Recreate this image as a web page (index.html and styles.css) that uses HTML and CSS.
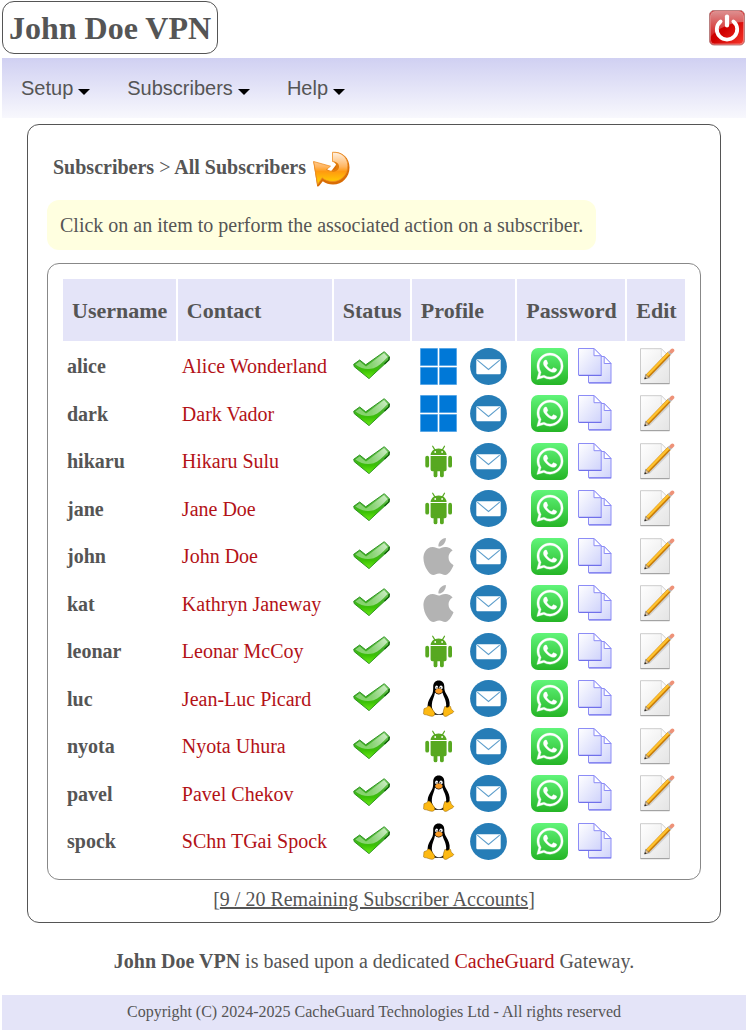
FILE: index.html
```html
<!DOCTYPE html>
<html lang="en">
<head>
  <meta charset="UTF-8">
  <meta name="viewport" content="width=device-width, initial-scale=1.0">
  <title>John Doe VPN</title>
  <link rel="stylesheet" href="styles.css">
</head>
<body>

<svg class="sprite" aria-hidden="true">
  <defs>
    <linearGradient id="gCheck" x1="0" y1="0" x2="0" y2="1">
      <stop offset="0" stop-color="#8fd67c"/>
      <stop offset=".45" stop-color="#3fb022"/>
      <stop offset=".7" stop-color="#3cc206"/>
      <stop offset="1" stop-color="#6aec14"/>
    </linearGradient>
    <linearGradient id="gGloss" x1="0" y1="0" x2="1" y2="0">
      <stop offset="0" stop-color="#a5e094"/>
      <stop offset=".5" stop-color="#a5e094"/>
      <stop offset="1" stop-color="#f2fbf0"/>
    </linearGradient>
    <linearGradient id="gWhats" x1="0" y1="0" x2="0" y2="1">
      <stop offset="0" stop-color="#61f57a"/>
      <stop offset="1" stop-color="#25b526"/>
    </linearGradient>
    <linearGradient id="gCopy" x1="0" y1="0" x2="1" y2="1">
      <stop offset="0" stop-color="#ffffff"/>
      <stop offset="1" stop-color="#cfd3fb"/>
    </linearGradient>
    <linearGradient id="gPage" x1="0" y1="0" x2="1" y2="1">
      <stop offset="0" stop-color="#ffffff"/>
      <stop offset="1" stop-color="#e4e4e4"/>
    </linearGradient>
    <linearGradient id="gPower" x1="0" y1="0" x2="1" y2="1">
      <stop offset="0" stop-color="#c60d10"/>
      <stop offset=".5" stop-color="#d00000"/>
      <stop offset="1" stop-color="#f8392d"/>
    </linearGradient>
    <linearGradient id="gShine" x1="0" y1="0" x2="0" y2="1">
      <stop offset="0" stop-color="#e0b0b0"/>
      <stop offset="1" stop-color="#d92020"/>
    </linearGradient>
    <linearGradient id="gBack" x1="0" y1="0" x2="0" y2="1">
      <stop offset="0" stop-color="#fff2e4"/>
      <stop offset=".45" stop-color="#ffb560"/>
      <stop offset=".6" stop-color="#ff9a10"/>
      <stop offset="1" stop-color="#ffd800"/>
    </linearGradient>
  </defs>

  <symbol id="check" viewBox="0 0 37 37">
    <path d="M.7 16.300 6.700 12l6 4.800L31.300 3.700l5 5-.3 3.300-20 18.600L1.300 18.700z" fill="url(#gCheck)" stroke="#2f9422" stroke-width="1" stroke-linejoin="round"/>
    <path d="M2.300 16.500 6.700 13.500l6.300 5L31 5.300l3.600 3.600c-5 5.500-9 9.600-14 11.300-6 1.600-12 .8-18.300-3.700z" fill="url(#gGloss)" opacity=".7"/>
    <path d="M36.200 8.900 35.800 12l-4.300 4" fill="none" stroke="#14600f" stroke-width="1.400"/>
  </symbol>

  <symbol id="windows" viewBox="0 0 37 37">
    <path d="M.5.5h17v17H.5zM19.500.5h17v17h-17zM.5 19.500h17v17H.5zM19.500 19.500h17v17h-17z" fill="#0078d7" stroke="#3f9be2" stroke-width=".6"/>
  </symbol>

  <symbol id="android" viewBox="0 0 37 37">
    <g fill="#57a820">
      <path d="M10.600 11.900c.3-3.600 3.400-6.400 8-6.400s7.700 2.800 8 6.400z"/>
      <path d="M10.600 13h16v13.500a1.800 1.800 0 0 1-1.800 1.800H12.400a1.800 1.800 0 0 1-1.800-1.800z"/>
      <rect x="5.300" y="12.800" width="3.800" height="11.800" rx="1.900"/>
      <rect x="28.200" y="12.800" width="3.800" height="11.800" rx="1.900"/>
      <rect x="13.600" y="24" width="3.800" height="10.300" rx="1.900"/>
      <rect x="20" y="24" width="3.800" height="10.300" rx="1.900"/>
    </g>
    <path d="m12.700 3.200 2 3.400M24.500 3.200l-2 3.400" stroke="#57a820" stroke-width="1.200" stroke-linecap="round"/>
    <circle cx="15.200" cy="9" r=".9" fill="#fff"/>
    <circle cx="22.100" cy="9" r=".9" fill="#fff"/>
  </symbol>

  <symbol id="apple" viewBox="0 0 37 37">
    <path transform="scale(1.540)" fill="#b3b3b3" d="M12.152 6.896c-.948 0-2.415-1.078-3.96-1.04-2.04.027-3.91 1.183-4.961 3.014-2.117 3.675-.546 9.103 1.519 12.09 1.013 1.454 2.208 3.09 3.792 3.039 1.52-.065 2.09-.987 3.935-.987 1.831 0 2.35.987 3.96.948 1.637-.026 2.676-1.48 3.676-2.948 1.156-1.688 1.636-3.325 1.662-3.415-.039-.013-3.182-1.221-3.22-4.857-.026-3.04 2.48-4.494 2.597-4.559-1.429-2.09-3.623-2.324-4.39-2.376-2-.156-3.675 1.09-4.61 1.09zM15.53 3.83c.843-1.012 1.4-2.427 1.245-3.83-1.207.052-2.662.805-3.532 1.818-.78.896-1.454 2.338-1.273 3.714 1.338.104 2.715-.688 3.559-1.701"/>
  </symbol>

  <symbol id="linux" viewBox="0 0 37 37">
    <path d="M18.700.4c3.600 0 5.600 2.400 5.600 6 0 3.300.4 5 2 7.700 2.200 3.600 3.800 7.400 3.300 11.400-.5 3.500-3 6.500-6 9.300H13c-3-2.500-5.500-5.500-5.400-9.300.1-4 2.300-7.300 4.100-10.500 1.500-2.700 1.500-5 1.500-8.100 0-4 2-6.500 5.500-6.500z" fill="#000"/>
    <path d="M15 12.500c2 2.600 5.500 2.600 7.500 0 .6 3.500 3.500 6.800 3.700 12 .1 5-2.700 9.700-7.200 9.700-4.600 0-7.300-4.200-7.200-9.200.1-4.500 2.500-8 3.200-12.500z" fill="#fff"/>
    <ellipse cx="16.600" cy="7.500" rx="1.500" ry="2" fill="#fff"/>
    <ellipse cx="21" cy="7.500" rx="1.700" ry="2" fill="#fff"/>
    <circle cx="17" cy="7.900" r=".7"/>
    <circle cx="20.600" cy="7.900" r=".7"/>
    <path d="M15 10.800c1.500-1.800 2.500-2.300 3.700-2.300 1.400 0 3 .9 4 2.200-.4 1.600-2 3.100-4 3.100-1.800 0-3.200-1.300-3.700-3z" fill="#fb9c25"/>
    <path d="M9 26c2 .5 3.500 4 5.300 6 1.200 1.800.4 4-2 4.300-2.500.2-4.600-1.600-8-1.800-1.200-.2-.6-2-.5-3.500.1-1.200-.2-2.700 1.200-2.700C7 28.200 7.500 25.700 9 26zM25 26.200c1.500 1.700 3.300 1.500 4.800-.2 1.300.3.700 2.300 1.800 3.500 1 1.200 2.500 1.400 2 2.400-1 1.700-4 2-6 3.800-1.800 1.200-4.200.9-4.500-1.700-.1-2.300.9-5.600 1.900-7.800z" fill="#fdb913" stroke="#8a5a00" stroke-width=".5"/>
  </symbol>

  <symbol id="mail" viewBox="0 0 37 37">
    <circle cx="18.500" cy="18.500" r="18.400" fill="#267db7"/>
    <rect x="6.300" y="11.200" width="24.400" height="15" rx="1.200" fill="#fff"/>
    <path d="m7.300 12.200 11.200 9.300 11.200-9.300" fill="none" stroke="#5f9fcc" stroke-width="1.100"/>
  </symbol>

  <symbol id="whatsapp" viewBox="0 0 37 37">
    <rect width="37" height="37" rx="7" fill="url(#gWhats)"/>
    <path transform="translate(5.800 5) scale(1.100)" fill="#fff" stroke="#fff" stroke-width=".3" d="M17.472 14.382c-.297-.149-1.758-.867-2.03-.967-.273-.099-.471-.148-.67.15-.197.297-.767.966-.94 1.164-.173.199-.347.223-.644.075-.297-.15-1.255-.463-2.39-1.475-.883-.788-1.48-1.761-1.653-2.059-.173-.297-.018-.458.13-.606.134-.133.298-.347.446-.52.149-.174.198-.298.298-.497.099-.198.05-.371-.025-.52-.075-.149-.669-1.612-.916-2.207-.242-.579-.487-.5-.669-.51-.173-.008-.371-.01-.57-.01-.198 0-.52.074-.792.372-.272.297-1.04 1.016-1.04 2.479 0 1.462 1.065 2.875 1.213 3.074.149.198 2.096 3.2 5.077 4.487.709.306 1.262.489 1.694.625.712.227 1.36.195 1.871.118.571-.085 1.758-.719 2.006-1.413.248-.694.248-1.289.173-1.413-.074-.124-.272-.198-.57-.347m-5.421 7.403h-.004a9.87 9.87 0 01-5.031-1.378l-.361-.214-3.741.982.998-3.648-.235-.374a9.86 9.86 0 01-1.51-5.26c.001-5.45 4.436-9.884 9.888-9.884 2.64 0 5.122 1.03 6.988 2.898a9.825 9.825 0 012.893 6.994c-.003 5.45-4.437 9.884-9.885 9.884m8.413-18.297A11.815 11.815 0 0012.05 0C5.495 0 .16 5.335.157 11.892c0 2.096.547 4.142 1.588 5.945L.057 24l6.305-1.654a11.882 11.882 0 005.683 1.448h.005c6.554 0 11.89-5.335 11.893-11.893a11.821 11.821 0 00-3.48-8.413z"/>
  </symbol>

  <symbol id="copy" viewBox="0 0 34 37">
    <g fill="url(#gCopy)" stroke="#8c8cf6" stroke-width="1" stroke-linejoin="round">
      <path d="M10.500 8.500h15.700l6.800 7v19.200H10.500z"/>
      <path d="M26.200 8.500v7H33z" fill="#fff"/>
      <path d="M.5.5H16l7.200 7.200v19.500H.5z"/>
      <path d="M16 .5v7.200h7.200z" fill="#fff"/>
    </g>
    <path d="M1 27.500h22.500M11 35h22.300" stroke="#7070ea" stroke-width="1"/>
  </symbol>

  <symbol id="edit" viewBox="0 0 37 37">
    <path d="M2.500.7h20.800L31.500 9v26.500h-29z" fill="url(#gPage)" stroke="#bfbfbf" stroke-width=".8"/>
    <path d="M2.500 35.700h29" stroke="#9a9a9a" stroke-width="1"/>
    <path d="M23.300.7v8.300h8.200z" fill="#fafafa" stroke="#cfcfcf" stroke-width=".6"/>
    <path d="m11 30 20-20" stroke="#999" stroke-width="2" opacity=".35"/>
    <path d="m9.200 28.300 22.300-23" stroke="#c67a08" stroke-width="4.200"/>
    <path d="m8.700 27.800 22.300-23" stroke="#ffc22e" stroke-width="2.400"/>
    <path d="m6.700 31 1-4.600 3.500 3.300z" fill="#e5c190" stroke="#666" stroke-width=".6"/>
    <path d="m6.400 31.300.6-2.200 1.500 1.500z" fill="#222"/>
    <path d="m31 5.800 1.800-1.900" stroke="#b8b8b8" stroke-width="4.200"/>
    <path d="m33.500 3.300.9-.9" stroke="#ee9278" stroke-width="3.800" stroke-linecap="round"/>
  </symbol>

  <symbol id="power" viewBox="0 0 36 36">
    <rect x=".5" y=".5" width="35" height="34.500" rx="4.500" fill="url(#gPower)" stroke="#b98080"/>
    <path d="M1.500 6a4.500 4.500 0 0 1 4.500-4.500h24A4.500 4.500 0 0 1 34.500 6v6C24 12 8 18 1.500 27z" fill="url(#gShine)" opacity=".8"/>
    <rect x="1.500" y="1.500" width="33" height="32.500" rx="3.800" fill="none" stroke="#fff" stroke-width=".7" opacity=".5"/>
    <path d="M11.600 11.400a10.200 10.200 0 1 0 12.800 0" fill="none" stroke="#fff" stroke-width="3.800" stroke-linecap="round"/>
    <path d="M18 6.500v9" stroke="#fff" stroke-width="4.200" stroke-linecap="round"/>
  </symbol>

  <symbol id="back" viewBox="0 0 37 36">
    <path d="M.4 10 4.200 35l1.600-.3 4-5C13 32 16 33 20 33c9.500 0 16.500-7.500 16.500-17C36.500 6.500 30 .3 20 .5L24 12l-6 8z" fill="#d96d05"/>
    <path d="M.6 10 17.500 14.700l-4.300 3.500c3.300 2.100 7.500 1.700 9.700-.5 2.600-2.700 1.300-7.200-3.400-7.700V.7C29 .3 34.800 6.300 34.800 14c0 9-6.300 16-15 16-4.300 0-7.800-1.200-10.600-3.700L4.600 33z" fill="url(#gBack)" stroke="#ee8f24" stroke-width=".8" stroke-linejoin="round"/>
    <path d="M19.500 10c3.800 1.300 4.800 5 3 7.600-1 1.600-2.800 2.400-4.700 2.700 4.200.8 8.700-1.800 8.200-5.800-.4-2.800-2.800-4.500-6.500-4.500z" fill="#e27b0a"/>
  </symbol>
</svg>

<header class="header">
  <h1 class="brand">John Doe VPN</h1>
  <a class="logout" href="#" aria-label="Log out"><svg class="power"><use href="#power"/></svg></a>
</header>

<nav class="navbar">
  <button type="button">Setup<span class="caret"></span></button>
  <button type="button">Subscribers<span class="caret"></span></button>
  <button type="button">Help<span class="caret"></span></button>
</nav>

<main class="container">
  <div class="crumbs">
    <h2>Subscribers <span>&gt;</span> All Subscribers</h2>
    <a href="#" aria-label="Back"><svg class="icon"><use href="#back"/></svg></a>
  </div>

  <p class="note">Click on an item to perform the associated action on a subscriber.</p>

  <div class="card">
    <table class="subscribers">
      <thead>
        <tr>
          <th>Username</th>
          <th>Contact</th>
          <th>Status</th>
          <th>Profile</th>
          <th>Password</th>
          <th>Edit</th>
        </tr>
      </thead>
      <tbody id="subscriberList"></tbody>
    </table>
  </div>

  <p class="remaining">[<a href="#">9 / 20 Remaining Subscriber Accounts</a>]</p>
</main>

<p class="based"><strong>John Doe VPN</strong> is based upon a dedicated <a href="#">CacheGuard</a> Gateway.</p>

<footer class="footer">Copyright (C) 2024-2025 CacheGuard Technologies Ltd - All rights reserved</footer>

<script src="script.js"></script>
</body>
</html>
```

FILE: styles.css
```css
body {
  margin: 0 1px 0 2px;
  font-family: "Liberation Serif", "Times New Roman", serif;
  font-size: 20px;
  line-height: 24px;
  color: #555;
  background: #fff;
}

a {
  color: #b31217;
  text-decoration: none;
}

svg {
  display: block;
}

.sprite {
  position: absolute;
  width: 0;
  height: 0;
}

.icon {
  width: 37px;
  height: 37px;
}

.icon.narrow {
  width: 34px;
}

.header {
  display: flex;
  justify-content: space-between;
  align-items: center;
  padding: 1px 1px 4px 0;
}

.brand {
  margin: 0;
  padding: 8px 6px 6px;
  border: 1px solid #555;
  border-radius: 12px;
  font-size: 32px;
  line-height: 37px;
}

.power {
  width: 36px;
  height: 36px;
}

.navbar {
  display: flex;
  height: 60px;
  background: linear-gradient(#d0d0f2, #f8f8fd);
}

.navbar button {
  display: flex;
  align-items: center;
  gap: 5px;
  padding: 0 18px 0 19px;
  border: none;
  background: none;
  font-family: "Liberation Sans", Arial, sans-serif;
  font-size: 20px;
  color: #555;
  cursor: pointer;
}

.caret {
  margin-top: 8px;
  border: 6px solid transparent;
  border-top-color: #000;
  border-bottom: none;
}

.container {
  margin: 6px 25px 0;
  padding: 26px 19px 11px;
  border: 1px solid #555;
  border-radius: 12px;
}

.crumbs {
  display: flex;
  align-items: center;
  gap: 7px;
  padding-left: 6px;
}

.crumbs h2 {
  margin: 0;
  padding-bottom: 6px;
  font-size: 20px;
}

.crumbs span {
  font-weight: normal;
}

.note {
  width: fit-content;
  margin: 12px 0 13px;
  padding: 13px;
  border-radius: 12px;
  background: #ffffe0;
}

.card {
  padding: 12px 13px 13px;
  border: 1px solid #888;
  border-radius: 12px;
}

.subscribers {
  width: 100%;
  border-spacing: 2px 3px;
}

.subscribers th {
  height: 60px;
  padding: 2px 8px 0 9px;
  background: #e4e4f8;
  font-size: 22px;
  text-align: left;
}

.subscribers td {
  height: 44px;
  padding: 0 4px;
}

.subscribers tr:nth-child(even) td {
  height: 45px;
}

.username {
  font-weight: bold;
}

.icons {
  display: flex;
  justify-content: center;
  gap: 13px;
  padding: 0 4px;
}

.icons.tight {
  gap: 10px;
}

.remaining {
  margin: 7px 0 0;
  text-align: center;
}

.remaining a {
  color: #555;
  text-decoration: underline;
}

.based {
  margin: 26px 0 22px;
  text-align: center;
}

.footer {
  padding: 5px 0 6px;
  background: #e4e4f8;
  font-size: 16px;
  text-align: center;
}
```

FILE: script.js
```js
const subscribers = [
  { username: "alice", contact: "Alice Wonderland", os: "windows" },
  { username: "dark", contact: "Dark Vador", os: "windows" },
  { username: "hikaru", contact: "Hikaru Sulu", os: "android" },
  { username: "jane", contact: "Jane Doe", os: "android" },
  { username: "john", contact: "John Doe", os: "apple" },
  { username: "kat", contact: "Kathryn Janeway", os: "apple" },
  { username: "leonar", contact: "Leonar McCoy", os: "android" },
  { username: "luc", contact: "Jean-Luc Picard", os: "linux" },
  { username: "nyota", contact: "Nyota Uhura", os: "android" },
  { username: "pavel", contact: "Pavel Chekov", os: "linux" },
  { username: "spock", contact: "SChn TGai Spock", os: "linux" }
];

function iconLink(name, extra = "") {
  return `<a href="#" aria-label="${name}"><svg class="icon ${extra}"><use href="#${name}"/></svg></a>`;
}

document.getElementById("subscriberList").innerHTML = subscribers.map(s => `
  <tr>
    <td class="username">${s.username}</td>
    <td><a href="#">${s.contact}</a></td>
    <td><div class="icons">${iconLink("check")}</div></td>
    <td><div class="icons">${iconLink(s.os)}${iconLink("mail")}</div></td>
    <td><div class="icons tight">${iconLink("whatsapp")}${iconLink("copy", "narrow")}</div></td>
    <td><div class="icons">${iconLink("edit")}</div></td>
  </tr>
`).join("");
```
